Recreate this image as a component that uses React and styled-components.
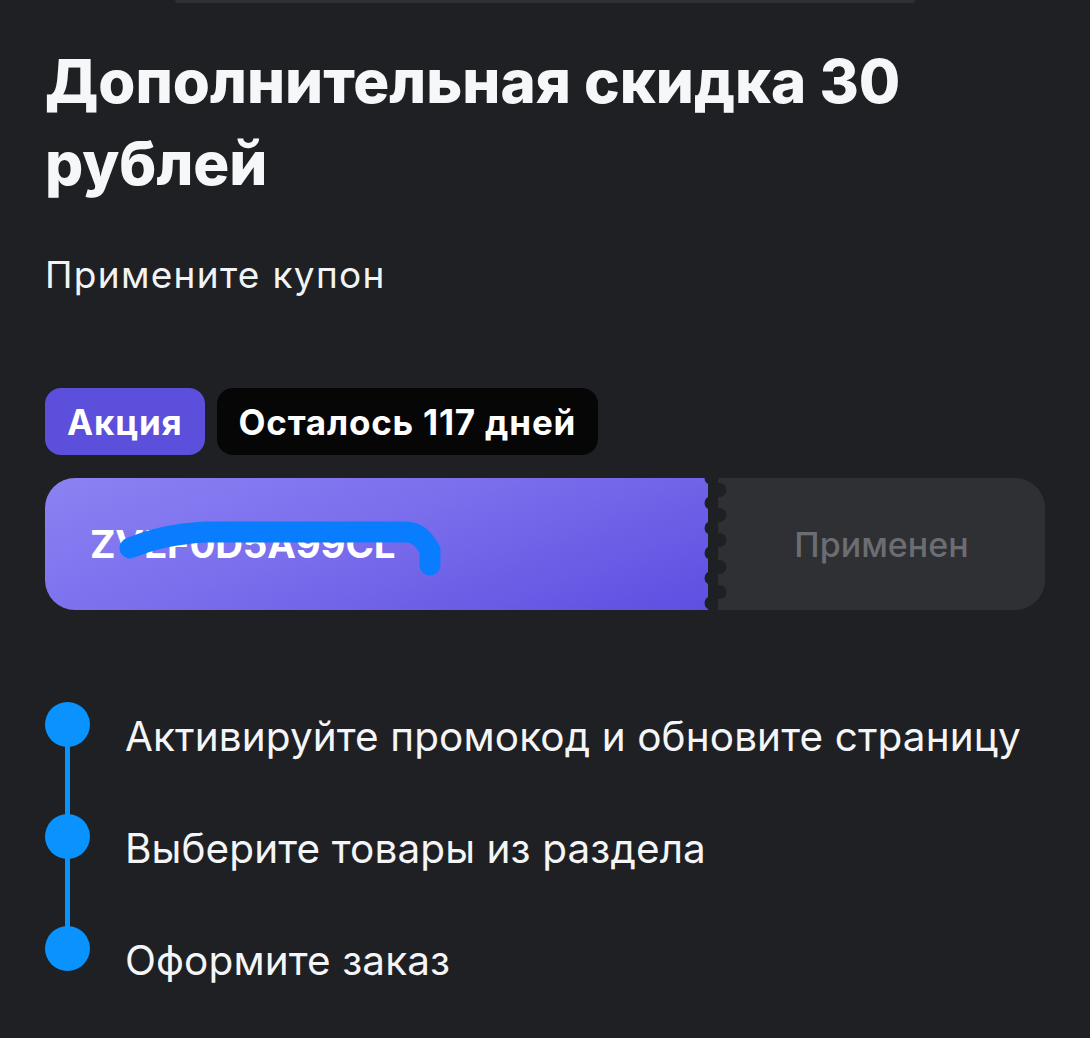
import React from 'react';
import styled, { createGlobalStyle } from 'styled-components';

const GlobalStyle = createGlobalStyle`
  html, body {
    margin: 0;
    padding: 0;
    background: #1e2024;
  }
  body {
    font-family: Inter, "Noto Sans", sans-serif;
    color: #f4f5f7;
  }
`;

const Page = styled.div`
  width: 1090px;
  height: 1038px;
  background: #1e2024;
  overflow: hidden;
  box-sizing: border-box;
`;

const TopEdge = styled.div`
  width: 740px;
  height: 3px;
  margin: 0 auto;
  background: #2e3034;
  border-radius: 0 0 10px 10px;
`;

const Content = styled.div`
  padding: 37px 45px 0;
`;

const Title = styled.h1`
  margin: 0;
  font-size: 60px;
  line-height: 82px;
  font-weight: 800;
  letter-spacing: 0;
  color: #f6f7f9;
`;

const Subtitle = styled.p`
  margin: 51px 0 0;
  font-size: 37px;
  line-height: 40px;
  font-weight: 400;
  letter-spacing: 1.3px;
  color: #f2f3f5;
`;

const Badges = styled.div`
  display: flex;
  gap: 12px;
  margin-top: 93px;
`;

const Badge = styled.span`
  display: inline-flex;
  align-items: center;
  height: 67px;
  padding: 0 22px;
  border-radius: 16px;
  font-size: 35px;
  font-weight: 700;
  letter-spacing: 0.8px;
  color: #ffffff;
  background: ${({ $tone }) => ($tone === 'accent' ? '#5b4fdc' : '#060606')};
`;

const Coupon = styled.div`
  position: relative;
  display: flex;
  height: 132px;
  margin-top: 23px;
  border-radius: 30px;
  overflow: hidden;
`;

const CodePart = styled.div`
  position: relative;
  flex: 0 0 667px;
  display: flex;
  align-items: center;
  padding-left: 45px;
  box-sizing: border-box;
  background: linear-gradient(160deg, #8b82f3 0%, #7a6eec 45%, #5d4fe1 100%);
`;

const Code = styled.span`
  font-size: 38.5px;
  font-weight: 700;
  letter-spacing: -0.2px;
  color: #ffffff;
`;

const Scribble = styled.svg`
  position: absolute;
  left: 0;
  top: 0;
  pointer-events: none;
`;

const Perforation = styled.svg`
  position: absolute;
  left: 655px;
  top: 0;
`;

const StatusPart = styled.div`
  flex: 1;
  display: flex;
  align-items: center;
  justify-content: center;
  padding-left: 6px;
  background: #2f3034;
  font-size: 34px;
  font-weight: 500;
  color: #6c6d72;
`;

const Steps = styled.ol`
  list-style: none;
  margin: 92px 0 0;
  padding: 0;
`;

const Step = styled.li`
  display: flex;
  gap: 35px;
  height: ${({ $last }) => ($last ? '60px' : '112px')};
`;

const Marker = styled.div`
  display: flex;
  flex-direction: column;
  align-items: center;
  flex: 0 0 45px;
`;

const Dot = styled.span`
  width: 45px;
  height: 45px;
  border-radius: 50%;
  background: #0a93ff;
  flex-shrink: 0;
`;

const Connector = styled.span`
  flex: 1;
  width: 5px;
  margin: -2px 0;
  background: #0a93ff;
`;

const StepText = styled.span`
  padding-top: 11px;
  font-size: 40.5px;
  line-height: 48px;
  font-weight: 400;
  letter-spacing: 0.1px;
  color: #f4f5f7;
`;

const steps = [
  'Активируйте промокод и обновите страницу',
  'Выберите товары из раздела',
  'Оформите заказ',
];

const leftHoles = [0, 25, 50, 75, 100, 125];
const rightHoles = [12, 37, 62, 89, 114];

export default function App() {
  return (
    <>
      <GlobalStyle />
      <Page>
        <TopEdge />
        <Content>
          <Title>Дополнительная скидка 30 рублей</Title>
          <Subtitle>Примените купон</Subtitle>

          <Badges>
            <Badge $tone="accent">Акция</Badge>
            <Badge>Осталось 117 дней</Badge>
          </Badges>

          <Coupon>
            <CodePart>
              <Code>ZVEF0D5A99CL</Code>
              <Scribble width="667" height="132" viewBox="0 0 667 132">
                <path
                  d="M85 70 C 110 60, 130 56, 160 54 L 360 54 C 372 54, 378 60, 385 72 L 385 87"
                  fill="none"
                  stroke="#0a7dff"
                  strokeWidth="21"
                  strokeLinecap="round"
                  strokeLinejoin="round"
                />
              </Scribble>
            </CodePart>
            <StatusPart>Применен</StatusPart>
            <Perforation width="30" height="132" viewBox="0 0 30 132">
              <rect x="8" y="0" width="10" height="132" fill="#1e2024" />
              {leftHoles.map((y) => (
                <circle key={`l${y}`} cx="11.5" cy={y} r="7" fill="#1e2024" />
              ))}
              {rightHoles.map((y) => (
                <circle key={`r${y}`} cx="19.5" cy={y} r="7" fill="#1e2024" />
              ))}
            </Perforation>
          </Coupon>

          <Steps>
            {steps.map((text, i) => {
              const last = i === steps.length - 1;
              return (
                <Step key={text} $last={last}>
                  <Marker>
                    <Dot />
                    {!last && <Connector />}
                  </Marker>
                  <StepText>{text}</StepText>
                </Step>
              );
            })}
          </Steps>
        </Content>
      </Page>
    </>
  );
}
